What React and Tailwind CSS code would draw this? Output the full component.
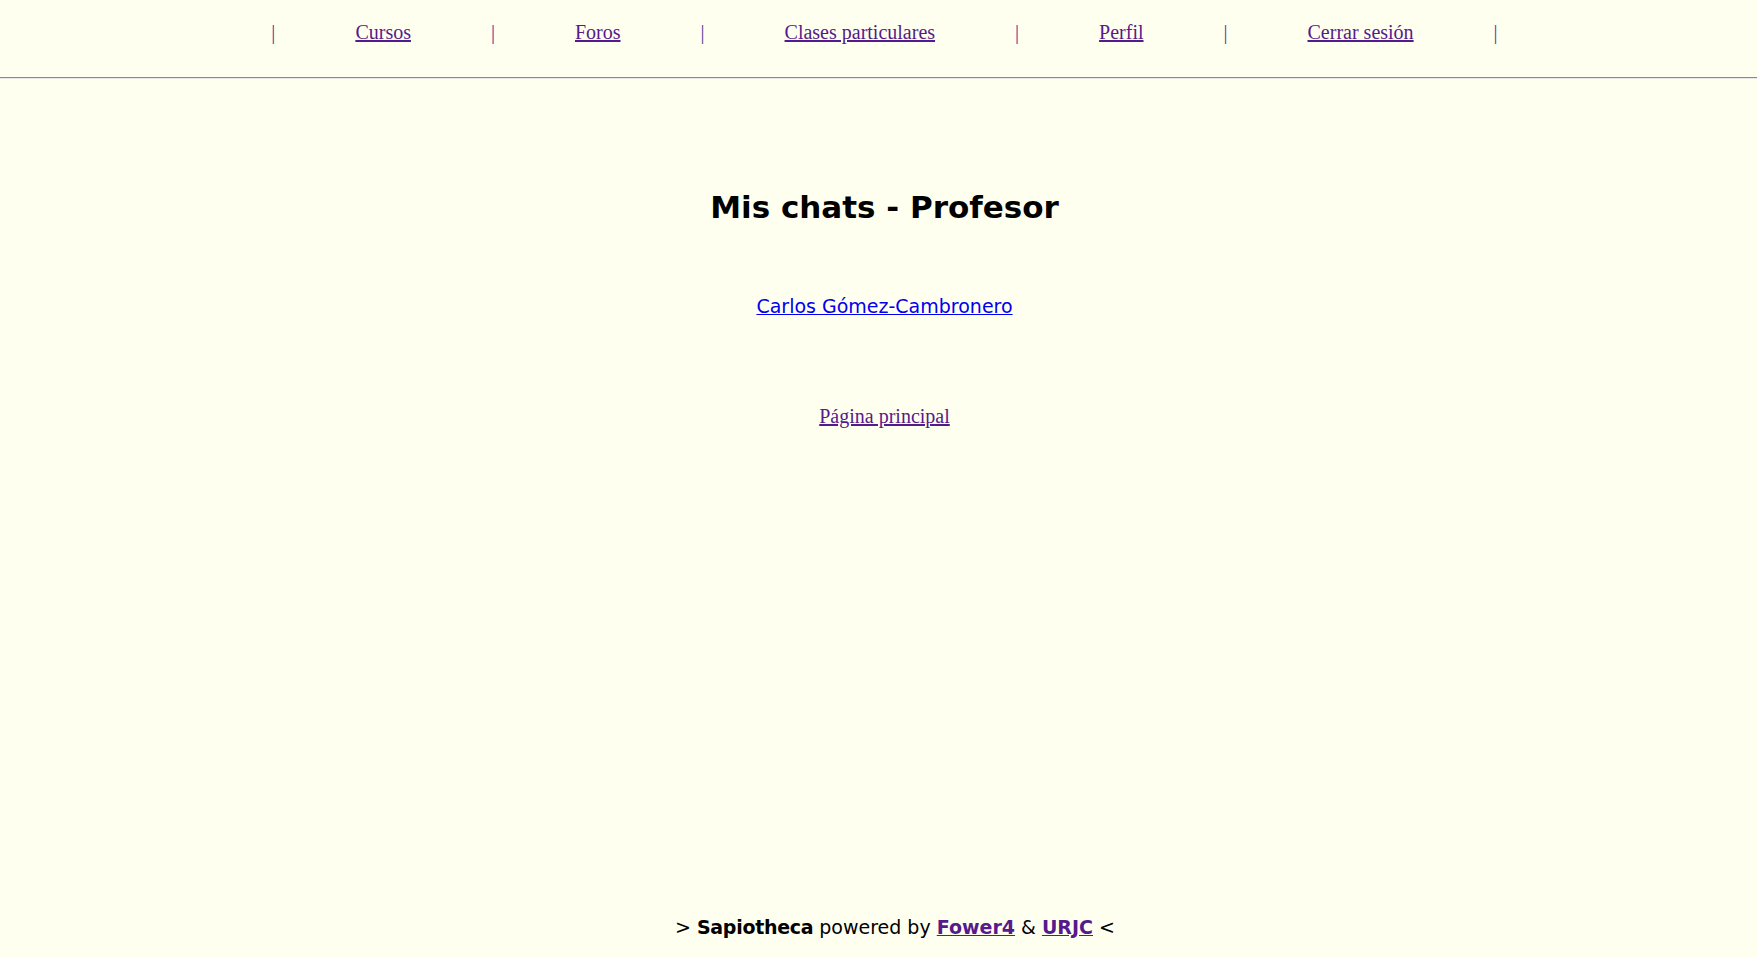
export default function App() {
  const links = ["Cursos", "Foros", "Clases particulares", "Perfil", "Cerrar sesión"];
  return (
    <div className="min-h-screen w-full bg-[#fffff0] flex flex-col">
      <nav className="h-[77px] pt-[21px] pl-[12px] flex justify-center font-['Liberation_Serif',serif] text-[20px] leading-[22px]">
        {links.map((l) => (
          <div key={l} className="flex">
            <span className="text-[#4e3a98]">|</span>
            <a href="#" className="px-20 text-[#551a8b] underline">{l}</a>
          </div>
        ))}
        <span className="text-[#4e3a98]">|</span>
      </nav>
      <div className="h-[2px] border-t border-b border-t-[#8a8a8a] border-b-[#e8e8e8]"></div>
      <main className="pl-[12px] flex flex-col items-center">
        <h1 className="mt-[110px] font-['DejaVu_Sans',Verdana,sans-serif] font-bold text-[31px] leading-[36px] text-black">
          Mis chats - Profesor
        </h1>
        <a href="#" className="mt-[70px] font-['DejaVu_Sans',Verdana,sans-serif] text-[19px] leading-[22px] text-[#0000ee] underline">
          Carlos Gómez-Cambronero
        </a>
        <a href="#" className="mt-[88px] font-['Liberation_Serif',serif] text-[20px] leading-[22px] text-[#551a8b] underline">
          Página principal
        </a>
      </main>
      <footer className="mt-auto pb-[19px] pl-[33px] text-center font-['DejaVu_Sans',Verdana,sans-serif] text-[19px] leading-[22px] text-black">
        &gt; <b className="tracking-[-0.3px]">Sapiotheca</b> powered by{" "}
        <a href="#" className="font-bold text-[#551a8b] underline">Fower4</a> &amp;{" "}
        <a href="#" className="font-bold text-[#551a8b] underline">URJC</a> &lt;
      </footer>
    </div>
  );
}
